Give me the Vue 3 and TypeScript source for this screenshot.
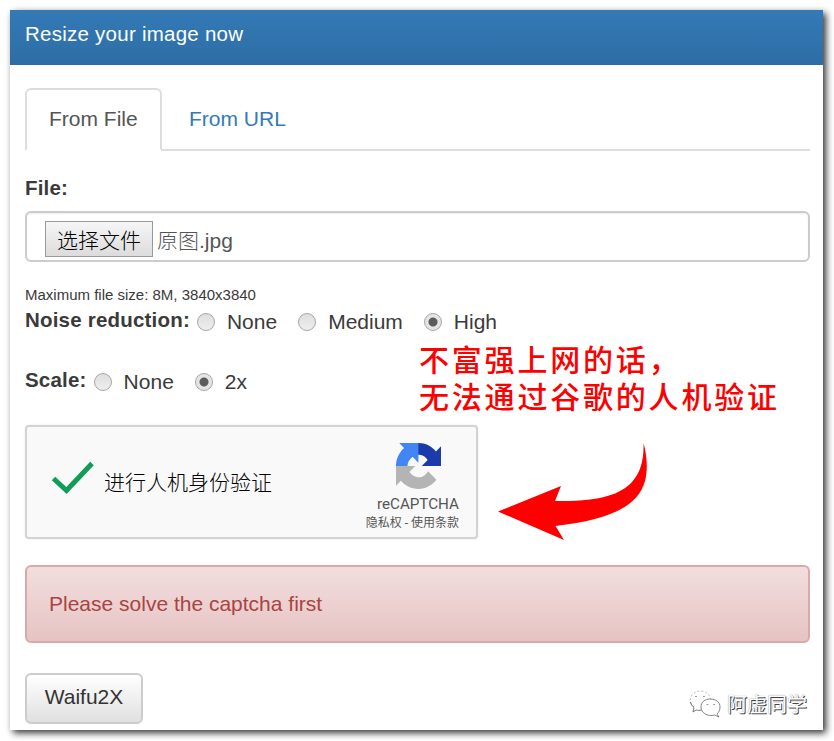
<script setup lang="ts">
import { ref } from 'vue'

interface Option { label: string; value: string }

const noiseOptions: Option[] = [
  { label: 'None', value: 'none' },
  { label: 'Medium', value: 'medium' },
  { label: 'High', value: 'high' },
]
const scaleOptions: Option[] = [
  { label: 'None', value: '1' },
  { label: '2x', value: '2' },
]
const noise = ref('high')
const scale = ref('2')
</script>

<template>
  <main class="panel">
    <header class="panel-head">Resize your image now</header>
    <div class="panel-body">
      <nav class="tabs">
        <a class="tab active">From File</a>
        <a class="tab">From URL</a>
      </nav>

      <label class="field-label">File:</label>
      <div class="file-input">
        <button class="choose" type="button">选择文件</button>
        <span class="file-name">原图.jpg</span>
      </div>
      <p class="hint">Maximum file size: 8M, 3840x3840</p>

      <div class="row">
        <b class="row-label">Noise reduction:</b>
        <label v-for="o in noiseOptions" :key="o.value" class="option" @click="noise = o.value">
          <i class="radio" :class="{ on: noise === o.value }"></i><span>{{ o.label }}</span>
        </label>
      </div>
      <div class="row">
        <b class="row-label">Scale:</b>
        <label v-for="o in scaleOptions" :key="o.value" class="option" @click="scale = o.value">
          <i class="radio" :class="{ on: scale === o.value }"></i><span>{{ o.label }}</span>
        </label>
      </div>

      <section class="captcha">
        <svg class="check" width="44" height="36" viewBox="0 0 44 36">
          <path d="M2.500 17.500L15.500 29.500L41 2.500" fill="none" stroke="#0f9d58" stroke-width="5" />
        </svg>
        <span class="captcha-text">进行人机身份验证</span>
        <div class="brand">
          <svg class="brand-logo" width="45" height="46" viewBox="0 0 64 64" preserveAspectRatio="none">
            <path fill="#1c3aa9" d="M64 31.955l-.033-1.37V4.687l-7.16 7.16C50.948 4.674 42.033.093 32.05.093c-10.4 0-19.622 4.96-25.458 12.64l11.736 11.86a15.55 15.55 0 0 1 4.754-5.334c2.05-1.6 4.952-2.906 8.968-2.906.485 0 .86.057 1.135.163 4.976.393 9.288 3.14 11.828 7.124l-8.307 8.307z" />
            <path fill="#4285f4" d="M31.862.094l-1.37.033H4.594l7.16 7.16C4.58 13.147 0 22.06 0 32.046c0 10.4 4.96 19.622 12.64 25.458L24.5 45.768a15.55 15.55 0 0 1-5.334-4.754c-1.6-2.05-2.906-4.952-2.906-8.968 0-.485.057-.86.163-1.135.393-4.976 3.14-9.288 7.124-11.828l8.307 8.307z" />
            <path fill="#b4b4b4" d="M.001 32.045l.033 1.37v25.898l7.16-7.16c5.86 7.173 14.774 11.754 24.76 11.754 10.4 0 19.622-4.96 25.458-12.64l-11.736-11.86a15.55 15.55 0 0 1-4.754 5.334c-2.05 1.6-4.952 2.906-8.968 2.906-.485 0-.86-.057-1.135-.163-4.976-.393-9.288-3.14-11.828-7.124l8.307-8.307z" />
          </svg>
          <span class="brand-name">reCAPTCHA</span>
          <span class="brand-links">隐私权 - 使用条款</span>
        </div>
      </section>

      <div class="alert">Please solve the captcha first</div>
      <button class="submit" type="button">Waifu2X</button>
    </div>

    <p class="note"><span>不富强上网的话，</span><span>无法通过谷歌的人机验证</span></p>
    <svg class="arrow" width="150" height="100" viewBox="0 0 150 100">
      <path fill="#fe0000" d="M0 70.500L63 45L57 60C100 61 122 54 134 41C143 31 146 18 145.500 2C149 14 150 29 147 40C140 66 110 79 57.500 85L66 99Z" />
    </svg>
    <div class="watermark">
      <svg width="34" height="28" viewBox="0 0 34 28" fill="#fff" stroke="#888" stroke-width="0.8">
        <path stroke-dasharray="2 2" stroke="#aaa" d="M5 17C1 14 0 9 3 5C8 -1 18 0 21 7C22 9 22 10 21.500 12" />
        <path stroke="none" d="M5 17L13 20L21 12L12 6Z" />
        <path fill="none" stroke="#555" d="M1.500 12C2 14.500 3 16 5 17.500L4 22L7 20C9 20.500 10.500 20.500 12.500 20" />
        <path stroke="#666" d="M28 24L30 27L25.500 25C19 27 12 23 12 17C12 12 16 9 21 9C27 9 31 12 31 17C31 20 30 22 28 24Z" />
        <path d="M6 6.500h2M14 6.500h2M17.500 14.500h2M24 14.500h2" />
      </svg>
      <span>阿虚同学</span>
    </div>
  </main>
</template>

<style>
body { margin: 0; background: #fff; }
</style>

<style scoped>
* { box-sizing: border-box; }
.panel {
  position: relative;
  width: 813px;
  height: 720px;
  margin: 10px;
  background: #fff;
  box-shadow: 3px 3px 7px rgba(0, 0, 0, 0.8);
  color: #3a3a3a;
  font-family: "Liberation Sans", "Noto Sans CJK SC", sans-serif;
  font-size: 21px;
}
.panel-head {
  height: 55px;
  padding: 0 15px;
  line-height: 48px;
  color: #fff;
  font-size: 20.5px;
  letter-spacing: 0.25px;
  background: linear-gradient(#337ab7, #2e6da4);
}
.panel-body { padding: 23px 13px 0 15px; }
.tabs { display: flex; height: 63px; border-bottom: 2px solid #ddd; }
.tab {
  height: 63px;
  padding: 0 22px;
  border: 2px solid transparent;
  line-height: 58px;
  color: #337ab7;
  margin-right: 3px;
}
.tab.active {
  width: 137px;
  color: #555;
  background: #fff;
  border-color: #ddd #ddd #fff;
  border-radius: 6px 6px 0 0;
}
.field-label { display: block; margin-top: 22px; height: 38px; line-height: 30px; font-weight: bold; font-size: 20.5px; letter-spacing: 0.2px; }
.file-input {
  display: flex;
  align-items: flex-start;
  gap: 4px;
  height: 51px;
  padding: 8px 18px;
  border: 2px solid #ccc;
  border-radius: 6px;
  box-shadow: inset 0 1px 2px rgba(0, 0, 0, 0.07);
}
.choose {
  width: 108px;
  height: 36px;
  padding: 0;
  border: 1px solid #999;
  background: linear-gradient(#f6f6f6, #dcdcdc);
  font: 300 21px/34px "Noto Sans CJK SC", sans-serif;
  color: #000;
}
.file-name { line-height: 39px; color: #555; font-weight: 300; }
.hint { margin: 22px 0 0; height: 21px; line-height: 22px; font-size: 15px; }
.row { display: flex; height: 60px; align-items: flex-start; line-height: 30px; }
.row-label { margin-right: 7px; font-size: 20.5px; letter-spacing: 0.2px; }
.option { display: flex; align-items: center; margin: 2px 21px 0 0; }
.radio {
  width: 18px;
  height: 18px;
  margin-right: 12px;
  border: 1px solid #a6a6a6;
  border-radius: 50%;
  background: linear-gradient(#dedede, #eee);
}
.radio.on { background: radial-gradient(circle, #5c5c5c 0 4px, #e5e5e5 5px); }
.captcha {
  display: flex;
  width: 453px;
  height: 114px;
  border: 2px solid #d3d3d3;
  border-radius: 4px;
  background: #f9f9f9;
  box-shadow: 0 0 3px rgba(0, 0, 0, 0.08);
}
.check { margin: 34px 0 0 24px; }
.captcha-text { margin: 39px 0 0 9px; font: 300 21px/30px "Noto Sans CJK SC", sans-serif; color: #000; }
.brand { width: 110px; margin: 16px 17px 0 auto; display: flex; flex-direction: column; align-items: flex-end; color: #555; }
.brand-logo { margin-right: 18px; }
.brand-name { font: 15.2px/20px Roboto, sans-serif; margin-top: 5px; }
.brand-links { font: 12px/18px Roboto, "Noto Sans CJK SC", sans-serif; white-space: nowrap; }
.alert {
  height: 78px;
  margin-top: 26px;
  padding: 0 22px;
  border: 2px solid #d9a9ac;
  border-radius: 6px;
  line-height: 74px;
  color: #a94442;
  background: linear-gradient(#f2dede, #e7c3c3);
}
.submit {
  display: block;
  width: 118px;
  height: 51px;
  margin-top: 30px;
  padding: 0 0 3px;
  border: 2px solid #ccc;
  border-radius: 6px;
  background: linear-gradient(#fff, #e0e0e0);
  font: 21px/44px "Liberation Sans", sans-serif;
  color: #333;
}
.note {
  position: absolute;
  left: 409px;
  top: 330px;
  display: flex;
  flex-direction: column;
  margin: 0;
  color: #fe0000;
  font: 500 30px/37px "Noto Sans CJK SC", sans-serif;
  letter-spacing: 2.8px;
  white-space: nowrap;
}
.arrow { position: absolute; left: 488px; top: 431px; }
.watermark {
  position: absolute;
  left: 679px;
  top: 679px;
  display: flex;
  align-items: center;
  gap: 4px;
  color: #fff;
  font: 400 20px/30px "Noto Sans CJK SC", sans-serif;
  text-shadow: 1px 1px 0 #444, 0 0 1px #777;
  white-space: nowrap;
}
</style>
